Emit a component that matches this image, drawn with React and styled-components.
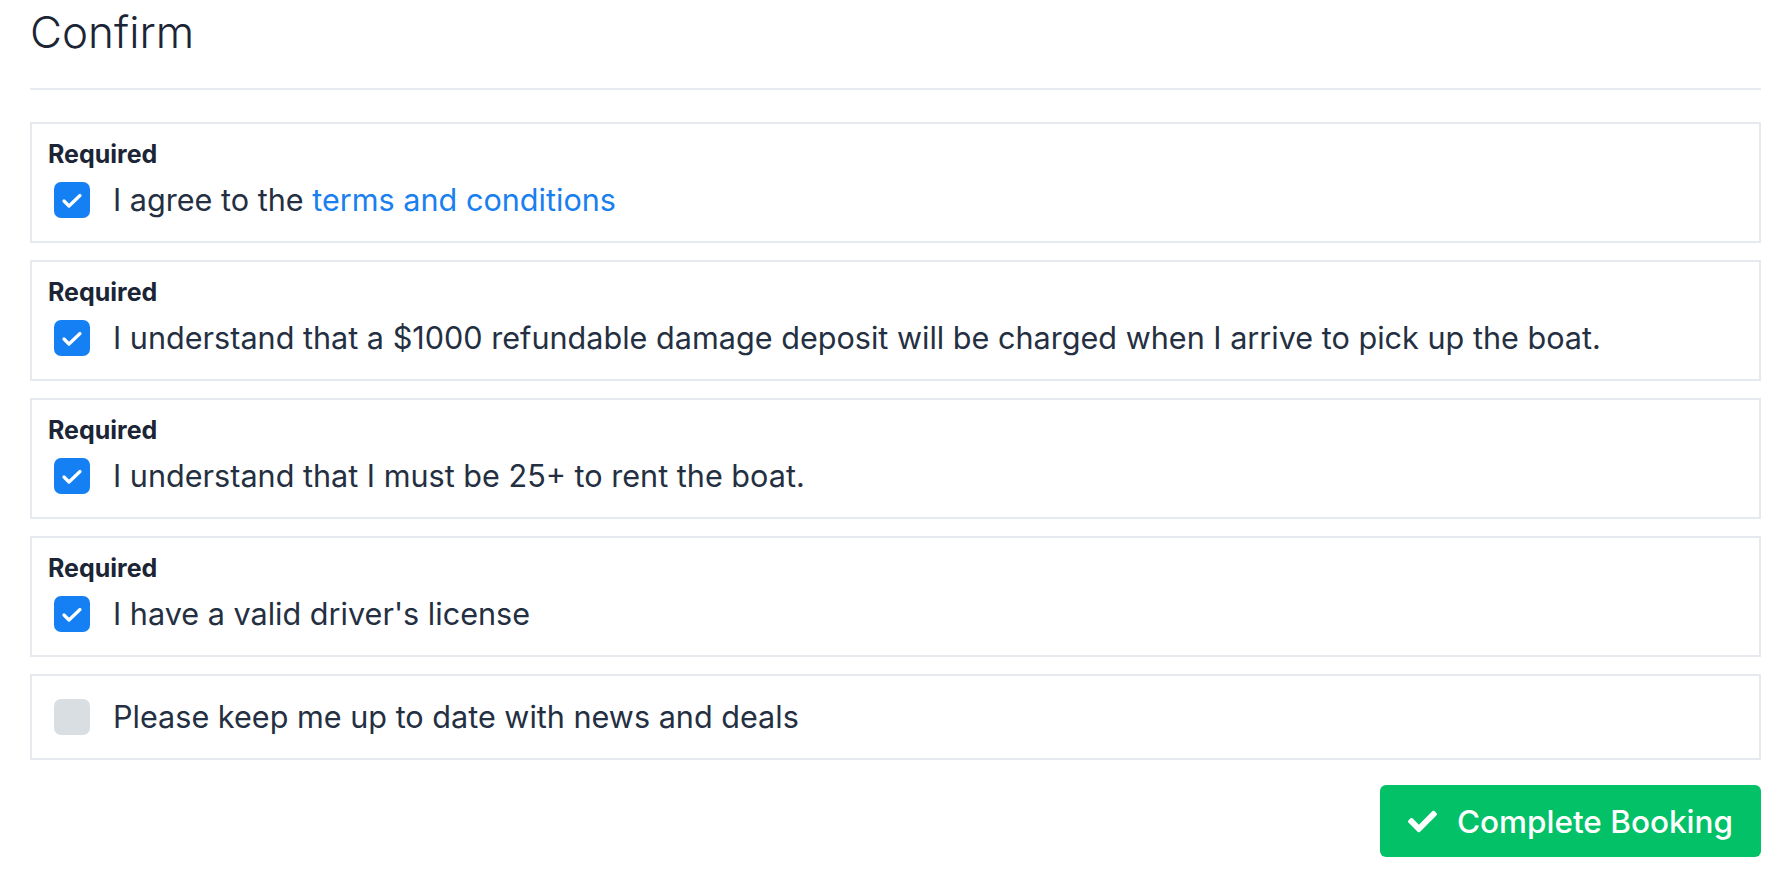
import React, { useState } from "react";
import styled, { createGlobalStyle } from "styled-components";
import { FaCheck } from "react-icons/fa";

const GlobalStyle = createGlobalStyle`
  body {
    margin: 0;
    background: #ffffff;
    font-family: "Inter", "Noto Sans", sans-serif;
    color: #1f2a3a;
  }
`;

const Page = styled.div`
  padding: 6px 29px 20px 30px;
`;

const Title = styled.h1`
  margin: 0;
  font-size: 44px;
  line-height: 53px;
  font-weight: 300;
  color: #1b2535;
`;

const Divider = styled.hr`
  border: none;
  border-top: 2px solid #e7eaee;
  margin: 29px 0 32px;
`;

const List = styled.div`
  display: flex;
  flex-direction: column;
  gap: 17px;
`;

const Card = styled.div`
  border: 2px solid #e6eaee;
  padding: ${(p) => (p.$label ? "14px 16px 22px" : "22px 16px")};
`;

const Label = styled.div`
  font-size: 25px;
  line-height: 32px;
  font-weight: 700;
  color: #1b2535;
  margin-bottom: 11px;
`;

const Row = styled.label`
  display: flex;
  align-items: center;
  gap: 23px;
  margin-left: 6px;
  cursor: pointer;
`;

const Box = styled.span`
  width: 36px;
  height: 36px;
  flex: none;
  border-radius: 7px;
  background: ${(p) => (p.$checked ? "#1580f3" : "#d9dee3")};
  display: flex;
  align-items: center;
  justify-content: center;
`;

const Text = styled.span`
  font-size: 30.6px;
  line-height: 38px;
  color: #243042;
`;

const Link = styled.a`
  color: #1a80f0;
  text-decoration: none;
`;

const Actions = styled.div`
  display: flex;
  justify-content: flex-end;
  margin-top: 25px;
`;

const Button = styled.button`
  display: flex;
  align-items: center;
  gap: 20px;
  height: 72px;
  padding: 0 28px;
  border: none;
  border-radius: 6px;
  background: #03c167;
  color: #ffffff;
  font-family: "Inter", "Noto Sans", sans-serif;
  font-size: 31.5px;
  font-weight: 500;
  cursor: pointer;
`;

const Tick = () => (
  <svg width="36" height="36" viewBox="0 0 36 36">
    <polyline
      points="10,19 15,24 26,13.5"
      fill="none"
      stroke="#ffffff"
      strokeWidth="3.2"
      strokeLinecap="round"
      strokeLinejoin="round"
    />
  </svg>
);

const items = [
  { id: "terms", required: true, text: <>I agree to the <Link href="#">terms and conditions</Link></> },
  { id: "deposit", required: true, text: "I understand that a $1000 refundable damage deposit will be charged when I arrive to pick up the boat." },
  { id: "age", required: true, text: "I understand that I must be 25+ to rent the boat." },
  { id: "license", required: true, text: "I have a valid driver's license" },
  { id: "news", required: false, text: "Please keep me up to date with news and deals" },
];

export default function App() {
  const [checked, setChecked] = useState({ terms: true, deposit: true, age: true, license: true, news: false });
  const toggle = (id) => setChecked({ ...checked, [id]: !checked[id] });

  return (
    <Page>
      <GlobalStyle />
      <Title>Confirm</Title>
      <Divider />
      <List>
        {items.map((item) => (
          <Card key={item.id} $label={item.required}>
            {item.required && <Label>Required</Label>}
            <Row onClick={() => toggle(item.id)}>
              <Box $checked={checked[item.id]}>{checked[item.id] && <Tick />}</Box>
              <Text>{item.text}</Text>
            </Row>
          </Card>
        ))}
      </List>
      <Actions>
        <Button>
          <FaCheck size={29} />
          Complete Booking
        </Button>
      </Actions>
    </Page>
  );
}
